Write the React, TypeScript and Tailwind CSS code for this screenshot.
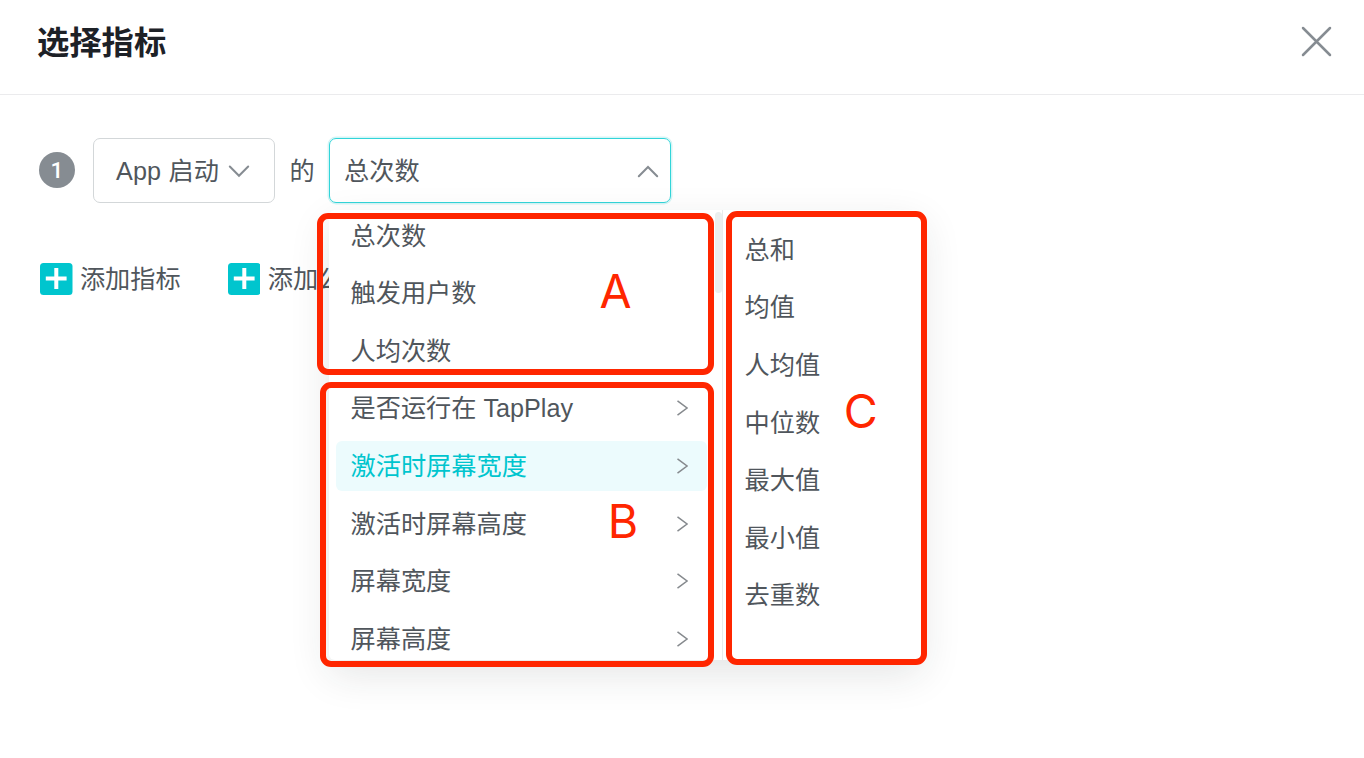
import React from "react";

type Item = { label: string; hasChildren?: boolean; active?: boolean };

const metrics: Item[] = [
  { label: "总次数" },
  { label: "触发用户数" },
  { label: "人均次数" },
  { label: "是否运行在 TapPlay", hasChildren: true },
  { label: "激活时屏幕宽度", hasChildren: true, active: true },
  { label: "激活时屏幕高度", hasChildren: true },
  { label: "屏幕宽度", hasChildren: true },
  { label: "屏幕高度", hasChildren: true },
];

const aggregations = ["总和", "均值", "人均值", "中位数", "最大值", "最小值", "去重数"];

function Chevron({ up = false }: { up?: boolean }) {
  return (
    <svg width="22" height="14" viewBox="0 0 22 14" fill="none" stroke="#868c92" strokeWidth="2" strokeLinecap="round">
      <path d={up ? "M1.8 12.3L11 3L20.2 12.3" : "M1.8 2.5L11 11.8L20.2 2.5"} />
    </svg>
  );
}

function AddButton({ label }: { label: string }) {
  return (
    <button className="flex items-center gap-[7.4px]">
      <svg width="32.5" height="32" viewBox="0 0 32.5 32">
        <rect width="32.5" height="32" rx="3.5" fill="#00c5ce" />
        <path d="M5.8 15.6H26.6M16.3 5.1V26" stroke="#fff" strokeWidth="4" />
      </svg>
      <span className="whitespace-nowrap">{label}</span>
    </button>
  );
}

export default function App() {
  return (
    <div className="relative h-[758px] w-[1364px] overflow-hidden bg-white font-['Liberation_Sans','Noto_Sans_CJK_SC',sans-serif] text-[25.2px] leading-[36px] text-[#50565c]">
      <header className="flex h-[95px] items-start justify-between border-b border-[#ebebed] pt-[18px] pr-[32px] pl-[37px]">
        <h1 className="mt-px text-[32.3px] leading-[48px] font-bold text-[#1d2127]">选择指标</h1>
        <button aria-label="关闭" className="mt-[8px]">
          <svg width="31" height="31" viewBox="0 0 31 31" fill="none" stroke="#868c92" strokeWidth="2.5" strokeLinecap="round">
            <path d="M2 2L29 29M29 2L2 29" />
          </svg>
        </button>
      </header>

      <main>
        <div className="mt-[43px] flex h-[65px] items-center pl-[39px]">
          <span className="mb-px flex size-9 items-center justify-center rounded-full bg-[#868c92] font-[Roboto] text-[22.5px] leading-none font-medium text-white">1</span>
          <button className="ml-[18px] flex h-[65px] w-[182px] items-center gap-[9px] rounded-[7px] border border-[#d3d7d9] pl-[22px]">
            <span className="whitespace-nowrap tracking-[0.15px]">App 启动</span>
            <Chevron />
          </button>
          <span className="ml-[14.5px] w-[25px]">的</span>
          <div className="relative ml-[14.5px]">
            <button className="flex h-[65px] w-[342px] items-center justify-between rounded-[7px] border border-[#32d5d9] pr-[11.5px] pl-[14px] shadow-[0_0_0_1.5px_#d5f5f6]">
              <span>总次数</span>
              <Chevron up />
            </button>

            <div className="absolute top-[72px] left-0 z-10 flex h-[450px] w-[593px] rounded-[6px] bg-white shadow-[0_14px_40px_rgba(30,40,40,0.12)]">
              <div className="relative w-[394px] overflow-hidden border-r border-[#e8ecec]">
                <ul className="-mt-[3.1px] w-[378px] pl-[7px]">
                  {metrics.map((m) => (
                    <li key={m.label} className="flex h-[57.6px] items-center">
                      <div
                        className={
                          m.active
                            ? "flex h-[50px] w-full items-center justify-between rounded-[6px] bg-[#ecfbfd] pr-[19px] pl-[14.5px] text-[#00c5ce]"
                            : "flex h-[50px] w-full items-center justify-between pr-[19px] pl-[14.5px]"
                        }
                      >
                        <span>{m.label}</span>
                        {m.hasChildren && (
                          <svg width="11" height="16" viewBox="0 0 11 16" fill="none" stroke="#868a8e" strokeWidth="1.5">
                            <path d="M0.5 0.8L10 8L0.5 15.2" />
                          </svg>
                        )}
                      </div>
                    </li>
                  ))}
                </ul>
                <div className="absolute top-[2px] right-0 h-[81px] w-[7px] rounded-full bg-[#ebefef]" />
              </div>
              <ul className="flex-1 pt-[11px] pl-[21.6px]">
                {aggregations.map((a) => (
                  <li key={a} className="flex h-[57.6px] items-center">{a}</li>
                ))}
              </ul>
            </div>
          </div>
        </div>

        <div className="mt-[60px] flex gap-[47.3px] pl-[40px] leading-[32px]">
          <AddButton label="添加指标" />
          <AddButton label="添加公式" />
        </div>
      </main>

      <div className="pointer-events-none absolute top-[213px] left-[317px] z-20 h-[162px] w-[397px] rounded-[11px] border-6 border-[#ff2600]" />
      <div className="pointer-events-none absolute top-[382px] left-[320px] z-20 h-[285px] w-[394px] rounded-[11px] border-6 border-[#ff2600]" />
      <div className="pointer-events-none absolute top-[211px] left-[726px] z-20 h-[454px] w-[201px] rounded-[11px] border-6 border-[#ff2600]" />
      <span className="absolute top-[267px] left-[599.5px] z-20 font-[Inter] text-[46.5px] leading-[48px] text-[#ff2600]">A</span>
      <span className="absolute top-[497px] left-[607.8px] z-20 font-[Inter] text-[46.5px] leading-[48px] text-[#ff2600]">B</span>
      <span className="absolute top-[387px] left-[843.7px] z-20 font-[Inter] text-[46.5px] leading-[48px] text-[#ff2600]">C</span>
    </div>
  );
}
